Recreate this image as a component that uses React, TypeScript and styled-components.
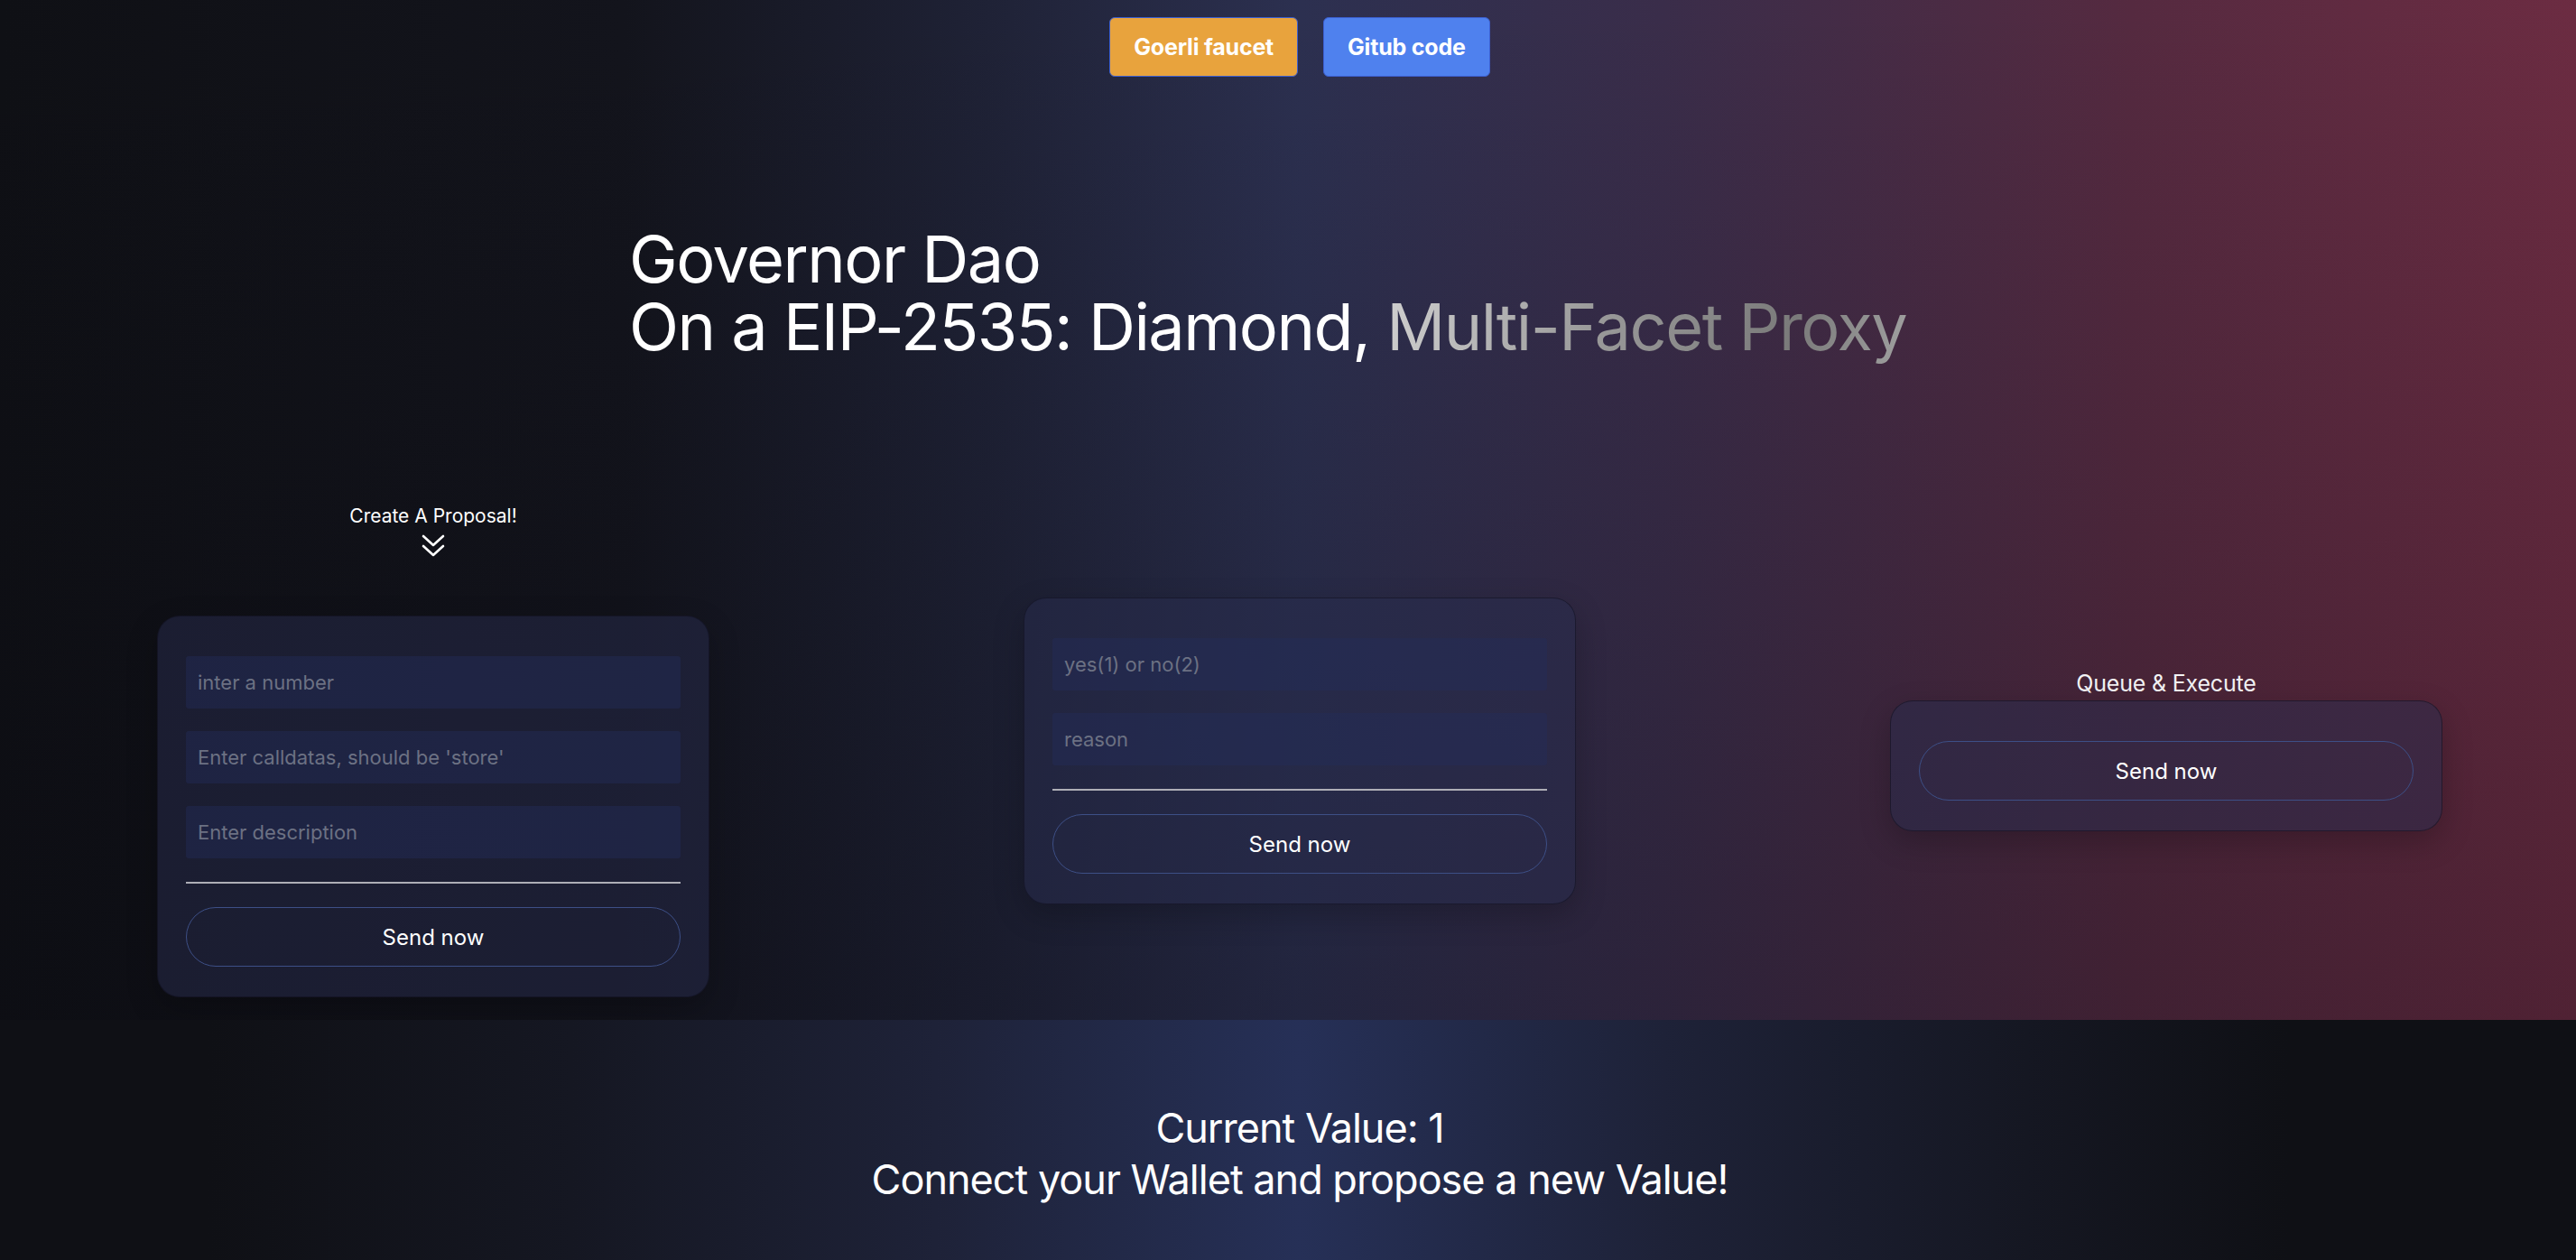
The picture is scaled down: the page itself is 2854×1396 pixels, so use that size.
import React from "react";
import styled, { createGlobalStyle } from "styled-components";

const GlobalStyle = createGlobalStyle`
  html, body {
    margin: 0;
    padding: 0;
    background: #0f1015;
    overflow-x: hidden;
  }
  body {
    font-family: Inter, "Noto Sans", "Liberation Sans", sans-serif;
    color: #ffffff;
  }
  * { box-sizing: border-box; }
`;

const Page = styled.div`
  width: 2880px;
  min-height: 1396px;
  display: flex;
  flex-direction: column;
`;

const Hero = styled.section`
  height: 1130px;
  padding-top: 19px;
  display: flex;
  flex-direction: column;
  background:
    linear-gradient(to bottom, rgba(0, 0, 0, 0) 0%, rgba(8, 8, 16, 0.28) 100%),
    linear-gradient(
      to right,
      #0f1015 0%,
      #13141c 24%,
      #1f2236 38%,
      #2c3050 50%,
      #3a2d4a 64%,
      #552a40 82%,
      #6d2c42 100%
    );
`;

const Nav = styled.nav`
  display: flex;
  justify-content: center;
  gap: 28px;
`;

const NavButton = styled.a<{ $tone: "orange" | "blue" }>`
  display: inline-flex;
  align-items: center;
  justify-content: center;
  height: 66px;
  padding: 0 26px;
  border-radius: 6px;
  border: 1px solid #3c5fd0;
  background: ${(p) => (p.$tone === "orange" ? "#e8a33d" : "#4f81ee")};
  color: #ffffff;
  font-size: 25px;
  font-weight: 700;
  text-decoration: none;
  letter-spacing: -0.2px;
`;

const Title = styled.h1`
  margin: 164px 0 0 697px;
  font-size: 72px;
  line-height: 75px;
  font-weight: 400;
  letter-spacing: -1.5px;
  color: #ffffff;
`;

const TitleLine = styled.span`
  display: block;
  height: 75px;
`;

const Fade = styled.span`
  background: linear-gradient(100deg, #cfcfcf 0%, #9a9a9a 40%, #7a7a7a 78%, #a0a0a0 100%);
  -webkit-background-clip: text;
  background-clip: text;
  color: transparent;
`;

const Row = styled.div`
  margin-top: 160px;
  display: grid;
  grid-template-columns: repeat(3, 960px);
  align-items: center;
`;

const Column = styled.div`
  display: flex;
  flex-direction: column;
  align-items: center;
`;

const ProposalHead = styled.div`
  display: flex;
  flex-direction: column;
  align-items: center;
  margin-bottom: 63px;
`;

const SmallLabel = styled.div`
  font-size: 21px;
  line-height: 25px;
  color: #ffffff;
`;

const Chevrons = styled.svg`
  display: block;
  margin-top: 7px;
`;

const QueueLabel = styled.div`
  font-size: 25px;
  line-height: 29px;
  text-align: center;
  color: #f2f2f4;
  margin-bottom: 4px;
  letter-spacing: -0.2px;
`;

const Card = styled.div`
  width: 612px;
  border-radius: 25px;
  border: 1px solid rgba(14, 15, 28, 0.55);
  background: rgba(40, 44, 78, 0.5);
  box-shadow: 0 12px 34px rgba(0, 0, 0, 0.22);
  padding: 44px 31px 33px;
  display: flex;
  flex-direction: column;
  gap: 25px;
`;

const Field = styled.input`
  height: 58px;
  width: 100%;
  border: none;
  outline: none;
  border-radius: 3px;
  background: rgba(36, 44, 88, 0.45);
  padding: 0 13px;
  font-family: Inter, "Noto Sans", "Liberation Sans", sans-serif;
  font-size: 22px;
  color: #ffffff;
  &::placeholder {
    color: #6c7183;
  }
`;

const Divider = styled.div`
  height: 2px;
  background: #aeaeb6;
  margin: 1px 0;
`;

const SendButton = styled.button`
  height: 66px;
  width: 100%;
  border-radius: 33px;
  border: 1px solid #3d4f86;
  background: transparent;
  color: #ffffff;
  font-family: Inter, "Noto Sans", "Liberation Sans", sans-serif;
  font-size: 24px;
  cursor: pointer;
`;

const Footer = styled.section`
  flex: 1;
  min-height: 266px;
  padding: 91px 0 40px;
  text-align: center;
  background: linear-gradient(
    to right,
    #0f1015 8%,
    #151722 22%,
    #1e2238 36%,
    #263057 50%,
    #1e2238 64%,
    #151722 78%,
    #0f1015 88%
  );
`;

const FooterText = styled.div`
  font-size: 45px;
  line-height: 57px;
  color: #ffffff;
  letter-spacing: -1px;
`;

const ChevronsDown = () => (
  <Chevrons width="28" height="28" viewBox="0 0 28 28" fill="none">
    <path d="M3 3 L14 13 L25 3" stroke="#ffffff" strokeWidth="2.6" strokeLinecap="round" strokeLinejoin="round" />
    <path d="M3 14 L14 24 L25 14" stroke="#ffffff" strokeWidth="2.6" strokeLinecap="round" strokeLinejoin="round" />
  </Chevrons>
);

export default function App() {
  return (
    <>
      <GlobalStyle />
      <Page>
        <Hero>
          <Nav>
            <NavButton $tone="orange" href="#">Goerli faucet</NavButton>
            <NavButton $tone="blue" href="#">Gitub code</NavButton>
          </Nav>
          <Title>
            <TitleLine>Governor Dao</TitleLine>
            <TitleLine>
              On a EIP-2535: Diamond, <Fade>Multi-Facet Proxy</Fade>
            </TitleLine>
          </Title>
          <Row>
            <Column>
              <ProposalHead>
                <SmallLabel>Create A Proposal!</SmallLabel>
                <ChevronsDown />
              </ProposalHead>
              <Card>
                <Field placeholder="inter a number" />
                <Field placeholder="Enter calldatas, should be 'store'" />
                <Field placeholder="Enter description" />
                <Divider />
                <SendButton>Send now</SendButton>
              </Card>
            </Column>
            <Column>
              <Card>
                <Field placeholder="yes(1) or no(2)" />
                <Field placeholder="reason" />
                <Divider />
                <SendButton>Send now</SendButton>
              </Card>
            </Column>
            <Column>
              <QueueLabel>Queue &amp; Execute</QueueLabel>
              <Card>
                <SendButton>Send now</SendButton>
              </Card>
            </Column>
          </Row>
        </Hero>
        <Footer>
          <FooterText>Current Value: 1</FooterText>
          <FooterText>Connect your Wallet and propose a new Value!</FooterText>
        </Footer>
      </Page>
    </>
  );
}
